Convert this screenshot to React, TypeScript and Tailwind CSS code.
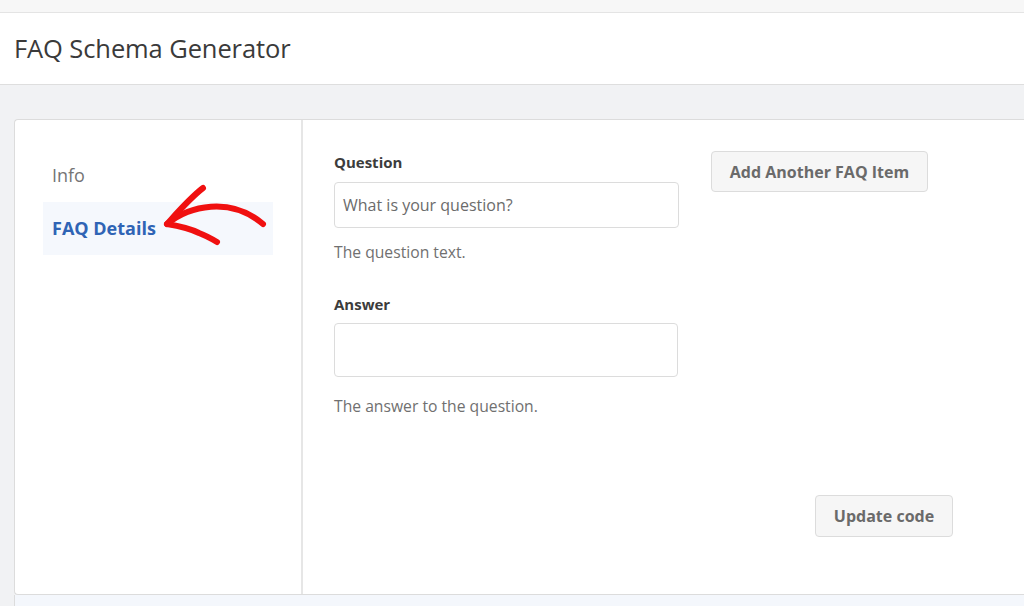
import React from "react";

export default function App() {
  return (
    <div
      className="w-full h-[606px] overflow-hidden bg-[#f1f2f4] relative"
      style={{ fontFamily: '"Open Sans", "Noto Sans", sans-serif' }}
    >
      <div className="h-[13px] bg-[#f7f7f7] border-b border-[#e4e4e4]" />
      <div className="h-[72px] bg-white border-b border-[#dedede] flex items-center pl-[14px]">
        <h1 className="text-[25.5px] text-[#3a3a3a] tracking-[-0.1px]">FAQ Schema Generator</h1>
      </div>
      <div className="pt-[34px] pl-[14px]">
        <div className="h-[476px] bg-white border border-r-0 border-[#dcdcdc] rounded-l-[4px] flex">
          <div className="w-[288px] shrink-0 border-r-2 border-[#e6e6e6] pt-[29px] pl-[28px] relative">
            <div className="w-[230px] h-[53px] flex items-center pl-[9px] text-[18px] text-[#757575]">
              Info
            </div>
            <div className="w-[230px] h-[53px] flex items-center pl-[9px] text-[18px] font-bold text-[#2f64b5] bg-[#f5f8fd]">
              FAQ Details
            </div>
            <svg
              className="absolute left-[135px] top-[60px]"
              width="130"
              height="70"
              viewBox="0 0 130 70"
              fill="none"
            >
              <path
                d="M17 44 C39 26 80 16 113 44"
                stroke="#f01010"
                strokeWidth="6"
                strokeLinecap="round"
                strokeLinejoin="round"
              />
              <path
                d="M53 8 C40 18 27 33 17 44 C29 46 41 49 49 53 C57 56 62 59 67 62"
                stroke="#f01010"
                strokeWidth="6"
                strokeLinecap="round"
                strokeLinejoin="round"
              />
            </svg>
          </div>
          <div className="flex-1 pl-[31px] pt-[32px]">
            <div className="flex">
              <div className="w-[345px]">
                <div className="text-[15px] font-bold text-[#3c3c3c] leading-[20px]">Question</div>
                <div className="mt-[10px] h-[46px] border border-[#dcdcdc] rounded-[4px] flex items-center pl-[8px] text-[16px] text-[#6b6b6b]">
                  What is your question?
                </div>
                <div className="mt-[14px] text-[15.7px] leading-[20px] text-[#707070]">The question text.</div>
                <div className="mt-[32px] text-[15px] font-bold text-[#3c3c3c] leading-[20px]">Answer</div>
                <div className="mt-[9px] h-[54px] w-[344px] border border-[#dcdcdc] rounded-[4px]" />
                <div className="mt-[19px] text-[15.7px] leading-[20px] text-[#707070]">The answer to the question.</div>
              </div>
              <div className="ml-[32px] -mt-[1px]">
                <button className="h-[41px] w-[217px] bg-[#f6f6f6] border border-[#dcdcdc] rounded-[4px] text-[16px] font-bold text-[#6a6a6a]">
                  Add Another FAQ Item
                </button>
              </div>
            </div>
            <div className="mt-[79px] ml-[481px]">
              <button className="h-[42px] w-[138px] bg-[#f6f6f6] border border-[#dcdcdc] rounded-[4px] text-[16px] font-bold text-[#6a6a6a]">
                Update code
              </button>
            </div>
          </div>
        </div>
        <div className="h-[20px] bg-[#f4f7fc] border-l border-[#dcdcdc]" />
      </div>
    </div>
  );
}
